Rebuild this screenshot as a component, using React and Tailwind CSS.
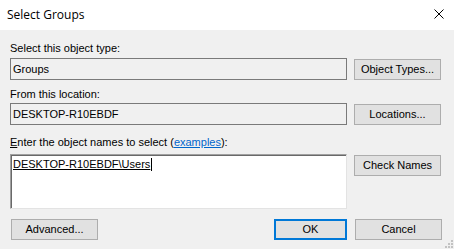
import React from "react";

const Btn = ({ children, focused }) => (
  <button
    type="button"
    className={
      focused
        ? "h-[21px] bg-[#e1e1e1] border-2 border-[#0078d7] text-black text-[11px] leading-[13px]"
        : "h-[21px] bg-[#e1e1e1] border border-[#adadad] text-black text-[11px] leading-[13px]"
    }
    style={{ width: focused ? 73 : 87 }}
  >
    {children}
  </button>
);

const ReadBox = ({ value }) => (
  <div className="h-[22px] w-[337px] bg-[#f0f0f0] border border-[#7a7a7a] flex items-center pl-[2px] text-[11px] leading-[13px] text-black">
    {value}
  </div>
);

export default function App() {
  return (
    <div
      className="w-[454px] h-[249px] bg-[#f0f0f0] flex flex-col select-none"
      style={{ fontFamily: '"Liberation Sans", Arial, sans-serif' }}
    >
      {/* Title bar */}
      <div className="h-[30px] bg-white flex items-center justify-between pl-[7px] pr-[10px] shrink-0">
        <span
          className="text-[12px] text-black"
          style={{ fontFamily: '"Open Sans", "Noto Sans", sans-serif' }}
        >
          Select Groups
        </span>
        <svg width="10" height="10" viewBox="0 0 10 10" className="mt-[-3px]">
          <path d="M0.5 0.5 L9.5 9.5 M9.5 0.5 L0.5 9.5" stroke="#000" strokeWidth="1" />
        </svg>
      </div>

      {/* Body */}
      <div className="relative flex-1 px-[10px] pt-[12px] text-[11px] leading-[13px] text-black">
        {/* Object type */}
        <div>Select this object type:</div>
        <div className="flex items-start gap-[7px] mt-[3px]">
          <ReadBox value="Groups" />
          <div className="mt-[1px]">
            <Btn>Object Types...</Btn>
          </div>
        </div>

        {/* Location */}
        <div className="mt-[8px]">From this location:</div>
        <div className="flex items-start gap-[7px] mt-[2px]">
          <ReadBox value="DESKTOP-R10EBDF" />
          <div className="mt-[1px]">
            <Btn>Locations...</Btn>
          </div>
        </div>

        {/* Object names */}
        <div className="mt-[11px]">
          <span className="underline">E</span>nter the object names to select (
          <span className="text-[#0066cc] underline">examples</span>):
        </div>
        <div className="flex items-start gap-[7px] mt-[5px]">
          <div className="h-[55px] w-[337px] bg-white border-t border-l border-[#a0a0a0] border-r border-b border-r-[#e3e3e3] border-b-[#e3e3e3] shadow-[inset_1px_1px_0_#696969] pl-[2px] pt-[3px]">
            <span className="underline">DESKTOP-R10EBDF\Users</span>
            <span className="inline-block w-px h-[13px] bg-black align-top ml-[1px]" />
          </div>
          <div className="mt-[1px]">
            <Btn>Check Names</Btn>
          </div>
        </div>

        {/* Bottom buttons */}
        <div className="flex items-center mt-[10px] pl-px pr-[2px]">
          <Btn>Advanced...</Btn>
          <div className="flex-1" />
          <Btn focused>OK</Btn>
          <div className="w-[8px]" />
          <Btn>Cancel</Btn>
        </div>

        {/* Resize grip */}
        <svg width="9" height="9" viewBox="0 0 9 9" className="absolute right-[1px] bottom-[1px]">
          <rect x="7" y="1" width="2" height="2" fill="#c2c2c2" />
          <rect x="4" y="4" width="2" height="2" fill="#c2c2c2" />
          <rect x="7" y="4" width="2" height="2" fill="#c2c2c2" />
          <rect x="1" y="7" width="2" height="2" fill="#c2c2c2" />
          <rect x="4" y="7" width="2" height="2" fill="#c2c2c2" />
          <rect x="7" y="7" width="2" height="2" fill="#c2c2c2" />
        </svg>
      </div>
    </div>
  );
}
